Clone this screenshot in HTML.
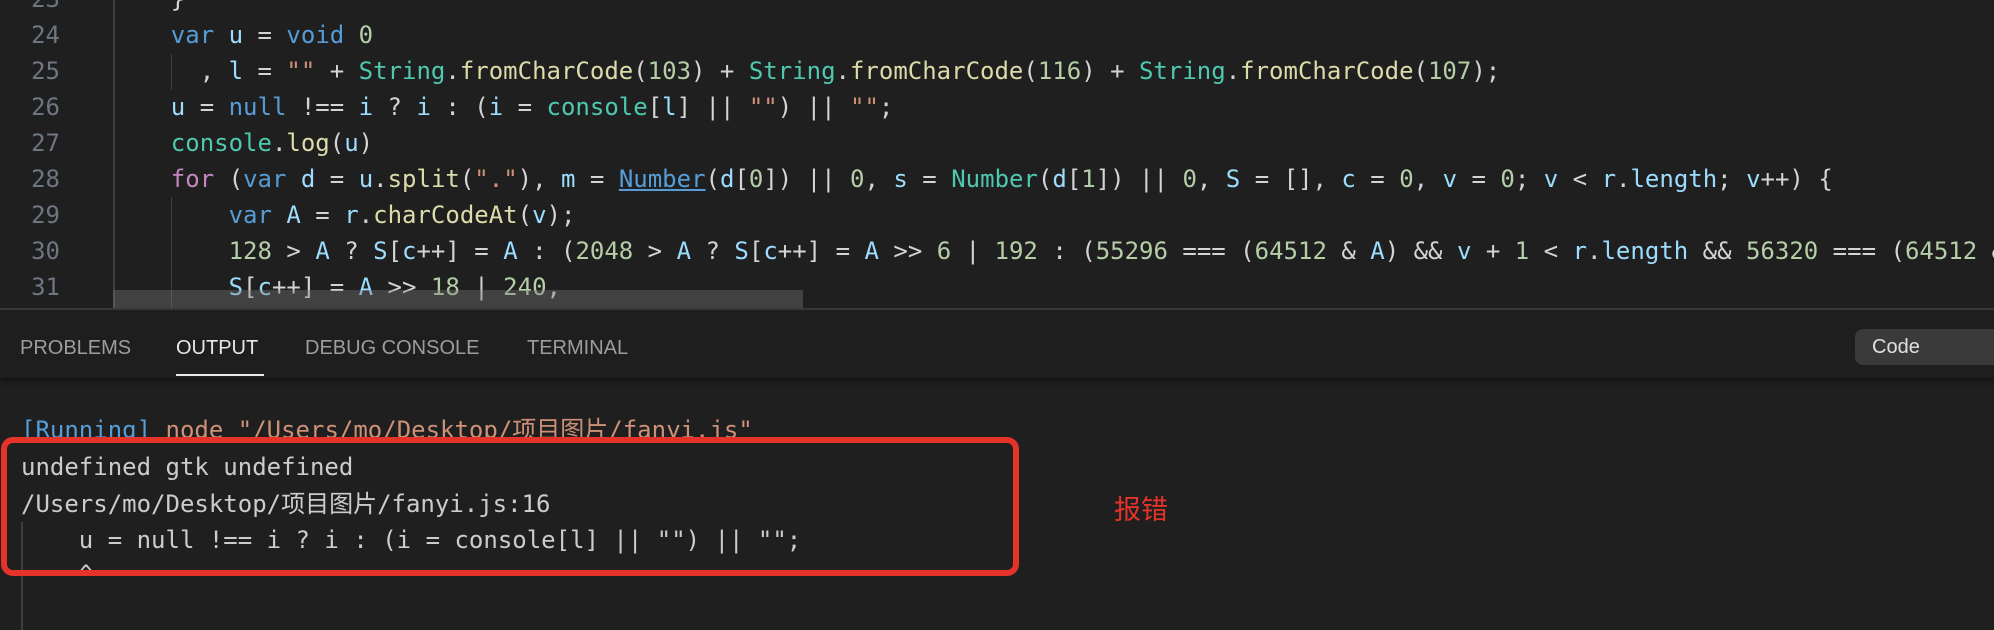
<!DOCTYPE html>
<html><head><meta charset="utf-8"><style>
*{margin:0;padding:0;box-sizing:border-box}
body{width:1994px;height:630px;background:#1f1f1f;overflow:hidden;position:relative;font-family:"DejaVu Sans Mono","Liberation Mono","Noto Sans CJK SC",monospace}
.ln{position:absolute;left:0;width:60px;text-align:right;color:#6e7681;font-size:24px;line-height:36px;height:36px}
.cl{position:absolute;left:113px;white-space:pre;color:#d4d4d4;font-size:24px;line-height:36px;height:36px}
.k{color:#569cd6}.v{color:#9cdcfe}.f{color:#dcdcaa}.c{color:#4ec9b0}.n{color:#b5cea8}.s{color:#ce9178}.p{color:#c586c0}
.ol{position:absolute;left:21px;white-space:pre;color:#cccccc;font-size:24px;line-height:37px;height:37px}
.tab{position:absolute;top:335px;font-family:"Liberation Sans",sans-serif;font-size:20px;color:#9d9d9d;line-height:26px}
</style></head><body>
<div style="position:absolute;left:0;top:0;width:1994px;height:308px;overflow:hidden">
<div style="position:absolute;left:113px;top:0;width:2px;height:308px;background:#404040"></div>
<div style="position:absolute;left:171px;top:54px;width:1px;height:36px;background:#404040"></div>
<div style="position:absolute;left:171px;top:197px;width:1px;height:111px;background:#404040"></div>
<div class="ln" style="top:-19px">23</div><div class="cl" style="top:-19px">    }</div>
<div class="ln" style="top:17px">24</div><div class="cl" style="top:17px">    <span class="k">var</span> <span class="v">u</span> = <span class="k">void</span> <span class="n">0</span></div>
<div class="ln" style="top:53px">25</div><div class="cl" style="top:53px">      , <span class="v">l</span> = <span class="s">""</span> + <span class="c">String</span>.<span class="f">fromCharCode</span>(<span class="n">103</span>) + <span class="c">String</span>.<span class="f">fromCharCode</span>(<span class="n">116</span>) + <span class="c">String</span>.<span class="f">fromCharCode</span>(<span class="n">107</span>);</div>
<div class="ln" style="top:89px">26</div><div class="cl" style="top:89px">    <span class="v">u</span> = <span class="k">null</span> !== <span class="v">i</span> ? <span class="v">i</span> : (<span class="v">i</span> = <span class="c">console</span>[<span class="v">l</span>] || <span class="s">""</span>) || <span class="s">""</span>;</div>
<div class="ln" style="top:125px">27</div><div class="cl" style="top:125px">    <span class="c">console</span>.<span class="f">log</span>(<span class="v">u</span>)</div>
<div class="ln" style="top:161px">28</div><div class="cl" style="top:161px">    <span class="p">for</span> (<span class="k">var</span> <span class="v">d</span> = <span class="v">u</span>.<span class="f">split</span>(<span class="s">"."</span>), <span class="v">m</span> = <span class="k" style="text-decoration:underline">Number</span>(<span class="v">d</span>[<span class="n">0</span>]) || <span class="n">0</span>, <span class="v">s</span> = <span class="c">Number</span>(<span class="v">d</span>[<span class="n">1</span>]) || <span class="n">0</span>, <span class="v">S</span> = [], <span class="v">c</span> = <span class="n">0</span>, <span class="v">v</span> = <span class="n">0</span>; <span class="v">v</span> &lt; <span class="v">r</span>.<span class="v">length</span>; <span class="v">v</span>++) {</div>
<div class="ln" style="top:197px">29</div><div class="cl" style="top:197px">        <span class="k">var</span> <span class="v">A</span> = <span class="v">r</span>.<span class="f">charCodeAt</span>(<span class="v">v</span>);</div>
<div class="ln" style="top:233px">30</div><div class="cl" style="top:233px">        <span class="n">128</span> &gt; <span class="v">A</span> ? <span class="v">S</span>[<span class="v">c</span>++] = <span class="v">A</span> : (<span class="n">2048</span> &gt; <span class="v">A</span> ? <span class="v">S</span>[<span class="v">c</span>++] = <span class="v">A</span> &gt;&gt; <span class="n">6</span> | <span class="n">192</span> : (<span class="n">55296</span> === (<span class="n">64512</span> &amp; <span class="v">A</span>) &amp;&amp; <span class="v">v</span> + <span class="n">1</span> &lt; <span class="v">r</span>.<span class="v">length</span> &amp;&amp; <span class="n">56320</span> === (<span class="n">64512</span> &amp; <span class="v">r</span>.<span class="f">charCodeAt</span>(<span class="v">v</span> + <span class="n">1</span>)) ? (</div>
<div class="ln" style="top:269px">31</div><div class="cl" style="top:269px">        <span class="v">S</span>[<span class="v">c</span>++] = <span class="v">A</span> &gt;&gt; <span class="n">18</span> | <span class="n">240</span>,</div>
<div style="position:absolute;left:113px;top:290px;width:690px;height:18px;background:rgba(121,121,121,0.4)"></div>
</div>
<div style="position:absolute;left:0;top:308px;width:1994px;height:2px;background:#3a3a3a"></div>
<div style="position:absolute;left:0;top:310px;width:1994px;height:68px;background:#1e1e1e;box-shadow:0 3px 6px rgba(0,0,0,0.45)"></div>
<div class="tab" style="left:20px">PROBLEMS</div>
<div class="tab" style="left:176px;color:#e7e7e7">OUTPUT</div>
<div style="position:absolute;left:176px;top:374px;width:88px;height:2px;background:#e7e7e7"></div>
<div class="tab" style="left:305px">DEBUG CONSOLE</div>
<div class="tab" style="left:527px">TERMINAL</div>
<div style="position:absolute;left:1855px;top:329px;width:160px;height:36px;background:#3a3a3a;border-radius:8px"></div>
<div style="position:absolute;left:1872px;top:334px;font-family:'Liberation Sans',sans-serif;font-size:20px;color:#e0e0e0;line-height:26px">Code</div>
<div style="position:absolute;left:21px;top:522px;width:2px;height:108px;background:#404040"></div>
<div class="ol" style="top:412px"><span style="color:#569cd6">[Running]</span> <span style="color:#ce9178">node "/Users/mo/Desktop/项目图片/fanyi.js"</span></div>
<div class="ol" style="top:449px">undefined gtk undefined</div>
<div class="ol" style="top:486px">/Users/mo/Desktop/项目图片/fanyi.js:16</div>
<div class="ol" style="top:522px">    u = null !== i ? i : (i = console[l] || "") || "";</div>
<div class="ol" style="top:556px">    ^</div>
<div style="position:absolute;left:1px;top:437px;width:1018px;height:139px;border:6px solid #e5332a;border-radius:12px"></div>
<div style="position:absolute;left:1114px;top:493px;font-family:'Liberation Sans','Noto Sans CJK SC',sans-serif;font-size:27px;color:#e5332a;line-height:34px">报错</div>
</body></html>
